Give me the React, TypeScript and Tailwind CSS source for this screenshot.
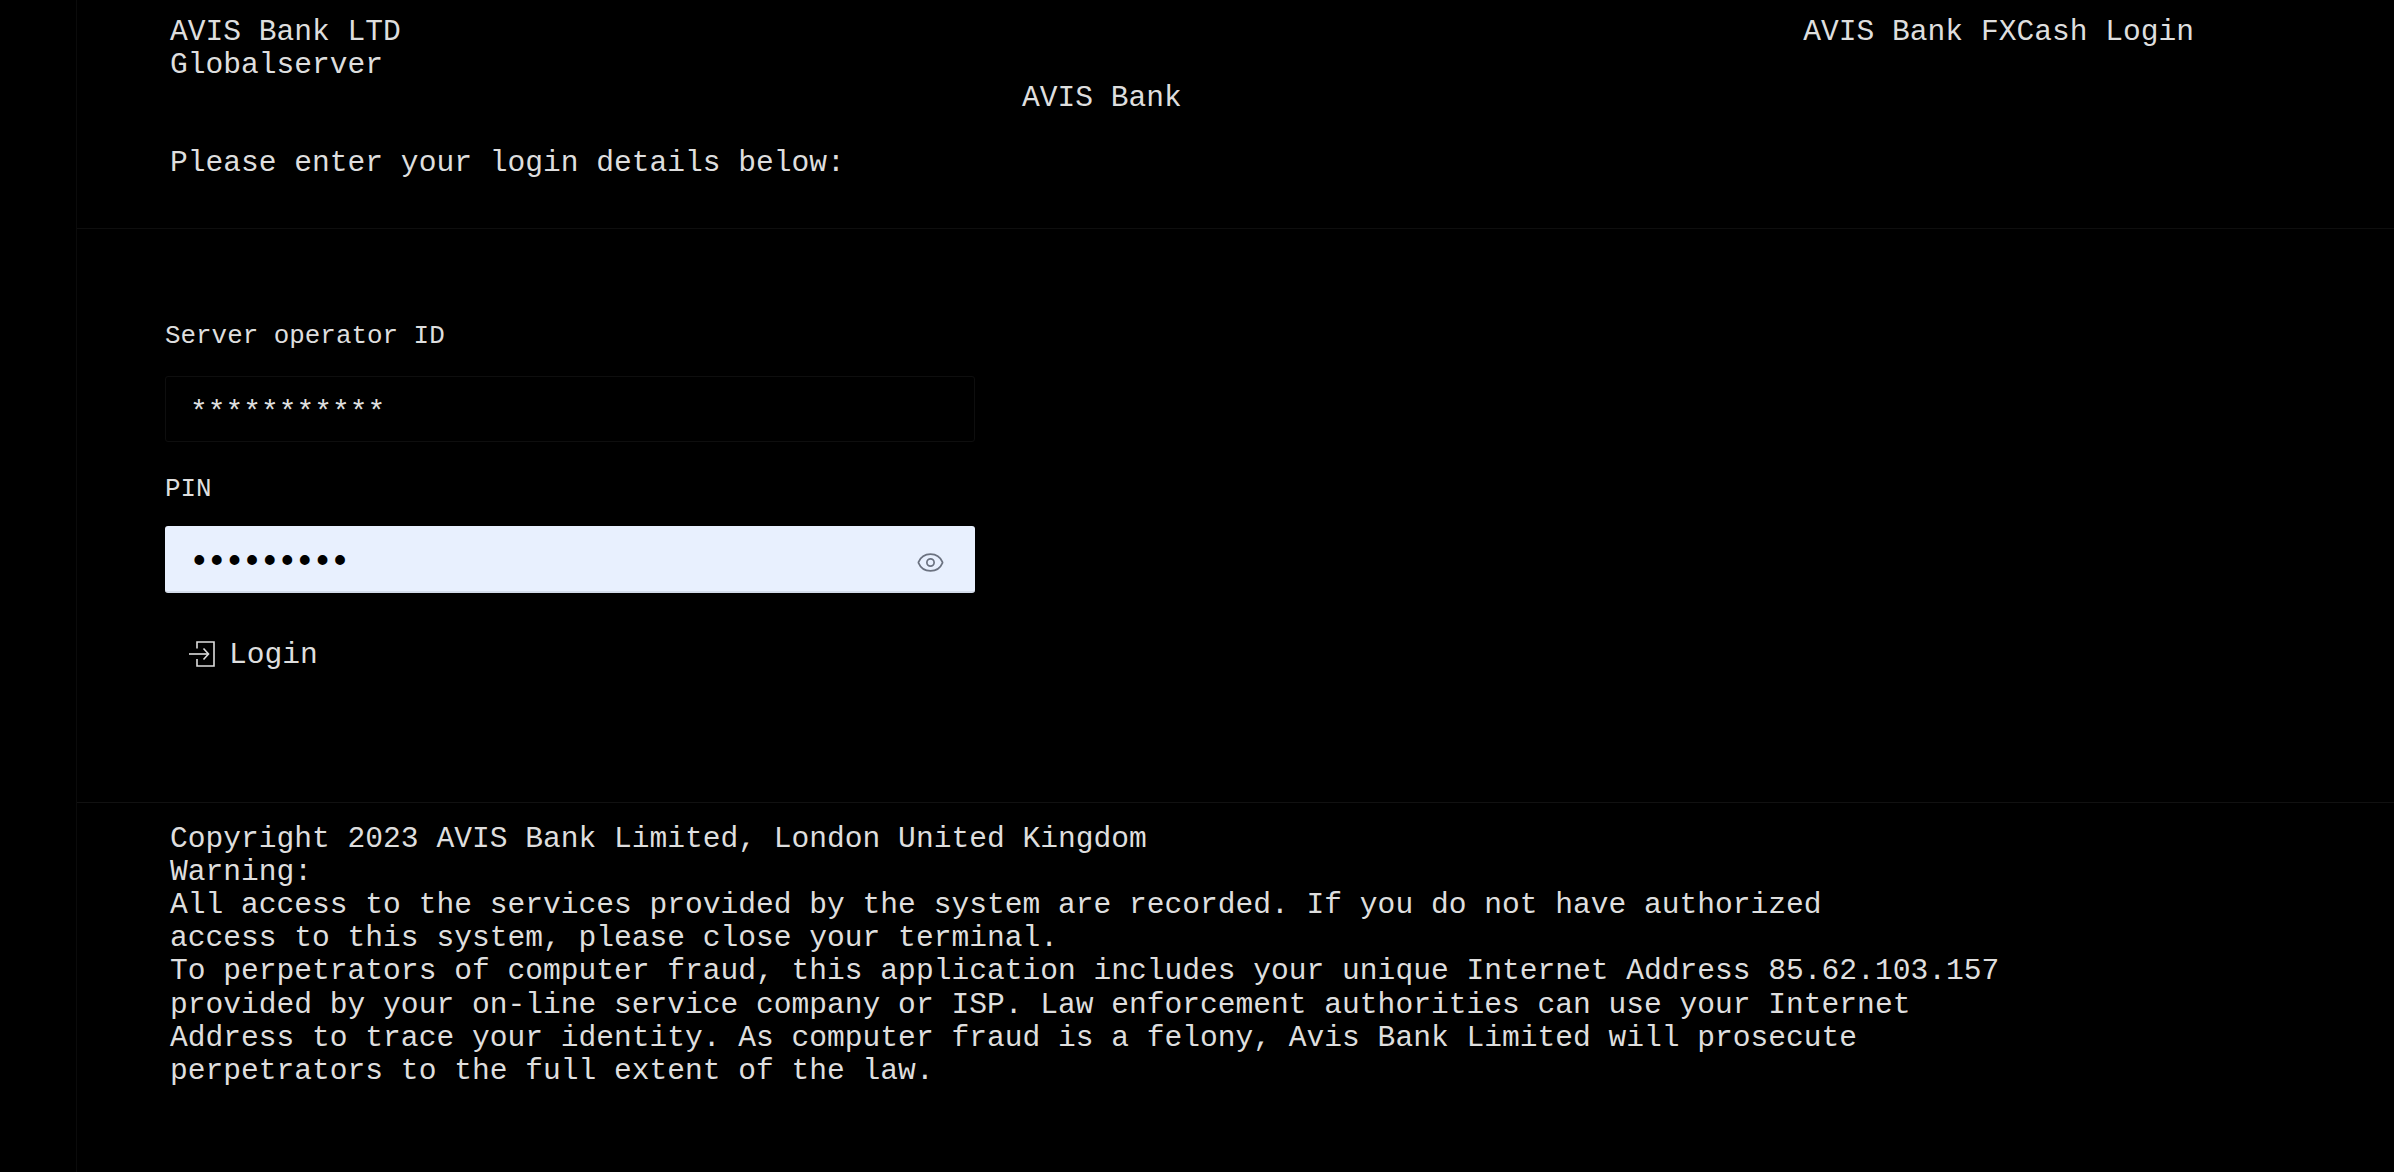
import React from 'react';
import { Eye } from 'lucide-react';

const LoginIcon = () => (
  <svg width="26" height="26" viewBox="0 0 26 26" fill="none" stroke="currentColor" strokeWidth="1.6" className="mt-[-3px]">
    <path d="M8 7.5V1h17v24H8v-7" />
    <path d="M0 13h19" />
    <path d="M14.5 7.5L19.5 13l-5 5.5" />
  </svg>
);

const App: React.FC = () => {
  return (
    <div className="h-[1172px] overflow-hidden bg-black text-[#dedede] font-['Liberation_Mono','Courier_New',monospace] text-[29.6px] leading-[33.2px]">
      <div className="ml-[76px] h-full border-l border-[#0b0b0b]">
        {/* Header */}
        <header className="h-[228px] pl-[93px] pr-[200px] pt-[15.5px]">
          <div className="flex justify-between">
            <div>
              AVIS Bank LTD
              <br />
              Globalserver
            </div>
            <div>AVIS Bank FXCash Login</div>
          </div>
          <div className="pl-[852px]">AVIS Bank</div>
          <div className="pt-[32px]">Please enter your login details below:</div>
        </header>

        {/* Form */}
        <main className="h-[574px] border-t border-[#0e0e0e] pl-[88px] pt-[91px]">
          <div className="w-[810px]">
            <label className="block text-[25.9px] leading-[33px]">Server operator ID</label>
            <div className="mt-[23px] flex h-[66px] items-center rounded-[3px] border border-[#0e0e0e] px-[24px] pt-[10px]">
              ***********
            </div>
            <label className="mt-[31px] block text-[25.9px] leading-[33px]">PIN</label>
            <div className="mt-[20px] flex h-[67px] items-center justify-between rounded-[3px] border-b-2 border-[#d3dbe9] bg-[#e8f0fe] pl-[23.5px] pr-[30px] text-black">
              <span className="pt-[9px] text-[36px] tracking-[-4px]">•••••••••</span>
              <Eye size={29} strokeWidth={1.4} className="mt-[8px] text-[#6b7280]" />
            </div>
            <button className="mt-[46px] ml-[24px] flex items-center gap-[14px] text-[#dedede]">
              <LoginIcon />
              <span>Login</span>
            </button>
          </div>
        </main>

        {/* Footer */}
        <footer className="border-t border-[#111111] pl-[93px] pt-[19.5px]">
          Copyright 2023 AVIS Bank Limited, London United Kingdom
          <br />
          Warning:
          <br />
          All access to the services provided by the system are recorded. If you do not have authorized
          <br />
          access to this system, please close your terminal.
          <br />
          To perpetrators of computer fraud, this application includes your unique Internet Address 85.62.103.157
          <br />
          provided by your on-line service company or ISP. Law enforcement authorities can use your Internet
          <br />
          Address to trace your identity. As computer fraud is a felony, Avis Bank Limited will prosecute
          <br />
          perpetrators to the full extent of the law.
        </footer>
      </div>
    </div>
  );
};

export default App;
